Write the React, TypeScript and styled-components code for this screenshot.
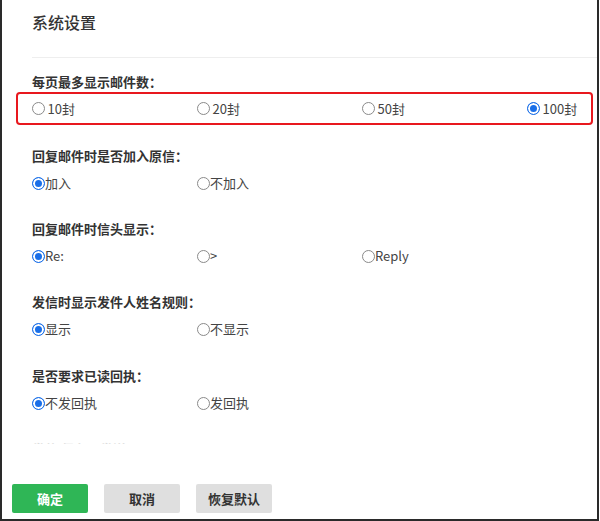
import React, { useState } from "react";
import styled, { createGlobalStyle } from "styled-components";

const Global = createGlobalStyle`
  html, body { margin: 0; padding: 0; background: #fff; }
  body { font-family: "Noto Sans CJK SC", "Microsoft YaHei", "Noto Sans", sans-serif; }
`;

const Frame = styled.div`
  width: 599px;
  height: 521px;
  box-sizing: border-box;
  border-left: 2px solid #2a2a2a;
  border-right: 2px solid #2a2a2a;
  border-bottom: 2px solid #2a2a2a;
  display: flex;
  flex-direction: column;
  background: #fff;
  color: #333;
`;

const Scroll = styled.div`
  height: 445px;
  overflow: hidden;
  padding-left: 30px;
  flex-shrink: 0;
`;

const Header = styled.div`
  height: 58px;
  box-sizing: border-box;
  padding-top: 11px;
  border-bottom: 1px solid #eeeeee;
`;

const Title = styled.h1`
  margin: 0;
  font-size: 16px;
  line-height: 22px;
  font-weight: 500;
  color: #333;
`;

const Section = styled.div<{ $top: number }>`
  margin-top: ${(p) => p.$top}px;
`;

const Label = styled.div<{ $faded?: boolean }>`
  font-size: 13px;
  line-height: 20px;
  font-weight: 700;
  color: ${(p) => (p.$faded ? "#dcdcdc" : "#333")};
`;

const Clip = styled.div`
  height: 5px;
  overflow: hidden;
`;

const Options = styled.div<{ $highlight?: boolean }>`
  display: grid;
  grid-template-columns: repeat(4, 165px);
  align-items: center;
  ${(p) =>
    p.$highlight
      ? `
    margin-left: -16px;
    width: 577px;
    height: 33px;
    box-sizing: border-box;
    border: 2.5px solid #e8181e;
    border-radius: 4px;
    padding-left: 13.5px;
  `
      : `
    margin-top: 7px;
    height: 20px;
  `}
`;

const Option = styled.label<{ $gap: number }>`
  display: inline-flex;
  align-items: center;
  gap: ${(p) => p.$gap}px;
  font-size: 13px;
  line-height: 20px;
  color: #444;
  cursor: pointer;
  white-space: nowrap;
`;

const Radio = styled.input.attrs({ type: "radio" })`
  appearance: none;
  -webkit-appearance: none;
  margin: 0;
  width: 13px;
  height: 13px;
  border-radius: 50%;
  border: 1px solid #8a8a8a;
  box-sizing: border-box;
  background: #fff;
  flex-shrink: 0;
  &:checked {
    border-color: #1a6fe8;
    background: #1a6fe8;
    box-shadow: inset 0 0 0 2px #fff;
  }
`;

const Footer = styled.div`
  flex: 1;
  display: flex;
  gap: 16px;
  padding: 39px 0 0 10px;
`;

const Button = styled.button<{ $primary?: boolean }>`
  width: 76px;
  height: 29px;
  border: none;
  border-radius: 2px;
  font-family: inherit;
  font-size: 13px;
  font-weight: 700;
  background: ${(p) => (p.$primary ? "#2fb656" : "#dfdfdf")};
  color: ${(p) => (p.$primary ? "#fff" : "#333")};
  cursor: pointer;
  padding: 0;
`;

type Group = {
  name: string;
  label: string;
  options: string[];
  top: number;
  highlight?: boolean;
  initial: number;
};

const groups: Group[] = [
  { name: "perpage", label: "每页最多显示邮件数：", options: ["10封", "20封", "50封", "100封"], top: 14, highlight: true, initial: 3 },
  { name: "quote", label: "回复邮件时是否加入原信：", options: ["加入", "不加入"], top: 21, initial: 0 },
  { name: "prefix", label: "回复邮件时信头显示：", options: ["Re:", ">", "Reply"], top: 26, initial: 0 },
  { name: "sender", label: "发信时显示发件人姓名规则：", options: ["显示", "不显示"], top: 26, initial: 0 },
  { name: "receipt", label: "是否要求已读回执：", options: ["不发回执", "发回执"], top: 27, initial: 0 },
];

function RadioGroup({ g }: { g: Group }) {
  const [value, setValue] = useState(g.initial);
  return (
    <Section $top={g.top}>
      <Label>{g.label}</Label>
      <Options $highlight={g.highlight}>
        {g.options.map((o, i) => (
          <Option key={o} $gap={g.highlight ? 3 : 0}>
            <Radio name={g.name} checked={value === i} onChange={() => setValue(i)} />
            {o}
          </Option>
        ))}
      </Options>
    </Section>
  );
}

export default function App() {
  return (
    <Frame>
      <Global />
      <Scroll>
        <Header>
          <Title>系统设置</Title>
        </Header>
        {groups.map((g) => (
          <RadioGroup key={g.name} g={g} />
        ))}
        <Section $top={26}>
          <Clip>
            <Label $faded>发信 保存已发送</Label>
          </Clip>
        </Section>
      </Scroll>
      <Footer>
        <Button $primary>确定</Button>
        <Button>取消</Button>
        <Button>恢复默认</Button>
      </Footer>
    </Frame>
  );
}
